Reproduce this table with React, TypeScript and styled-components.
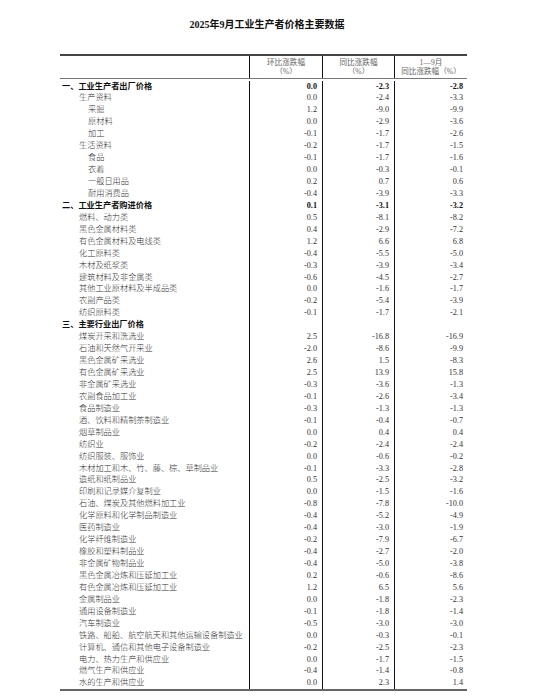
import styled, { createGlobalStyle } from "styled-components";

type Row = {
  label: string;
  level: 0 | 1 | 2;
  values?: [string, string, string];
};

const rows: Row[] = [
  { label: "一、工业生产者出厂价格", level: 0, values: ["0.0", "-2.3", "-2.8"] },
  { label: "生产资料", level: 1, values: ["0.0", "-2.4", "-3.3"] },
  { label: "采掘", level: 2, values: ["1.2", "-9.0", "-9.9"] },
  { label: "原材料", level: 2, values: ["0.0", "-2.9", "-3.6"] },
  { label: "加工", level: 2, values: ["-0.1", "-1.7", "-2.6"] },
  { label: "生活资料", level: 1, values: ["-0.2", "-1.7", "-1.5"] },
  { label: "食品", level: 2, values: ["-0.1", "-1.7", "-1.6"] },
  { label: "衣着", level: 2, values: ["0.0", "-0.3", "-0.1"] },
  { label: "一般日用品", level: 2, values: ["0.2", "0.7", "0.6"] },
  { label: "耐用消费品", level: 2, values: ["-0.4", "-3.9", "-3.3"] },
  { label: "二、工业生产者购进价格", level: 0, values: ["0.1", "-3.1", "-3.2"] },
  { label: "燃料、动力类", level: 1, values: ["0.5", "-8.1", "-8.2"] },
  { label: "黑色金属材料类", level: 1, values: ["0.4", "-2.9", "-7.2"] },
  { label: "有色金属材料及电线类", level: 1, values: ["1.2", "6.6", "6.8"] },
  { label: "化工原料类", level: 1, values: ["-0.4", "-5.5", "-5.0"] },
  { label: "木材及纸浆类", level: 1, values: ["-0.3", "-3.9", "-3.4"] },
  { label: "建筑材料及非金属类", level: 1, values: ["-0.6", "-4.5", "-2.7"] },
  { label: "其他工业原材料及半成品类", level: 1, values: ["0.0", "-1.6", "-1.7"] },
  { label: "农副产品类", level: 1, values: ["-0.2", "-5.4", "-3.9"] },
  { label: "纺织原料类", level: 1, values: ["-0.1", "-1.7", "-2.1"] },
  { label: "三、主要行业出厂价格", level: 0 },
  { label: "煤炭开采和洗选业", level: 1, values: ["2.5", "-16.8", "-16.9"] },
  { label: "石油和天然气开采业", level: 1, values: ["-2.0", "-8.6", "-9.9"] },
  { label: "黑色金属矿采选业", level: 1, values: ["2.6", "1.5", "-8.3"] },
  { label: "有色金属矿采选业", level: 1, values: ["2.5", "13.9", "15.8"] },
  { label: "非金属矿采选业", level: 1, values: ["-0.3", "-3.6", "-1.3"] },
  { label: "农副食品加工业", level: 1, values: ["-0.1", "-2.6", "-3.4"] },
  { label: "食品制造业", level: 1, values: ["-0.3", "-1.3", "-1.3"] },
  { label: "酒、饮料和精制茶制造业", level: 1, values: ["-0.1", "-0.4", "-0.7"] },
  { label: "烟草制品业", level: 1, values: ["0.0", "0.4", "0.4"] },
  { label: "纺织业", level: 1, values: ["-0.2", "-2.4", "-2.4"] },
  { label: "纺织服装、服饰业", level: 1, values: ["0.0", "-0.6", "-0.2"] },
  { label: "木材加工和木、竹、藤、棕、草制品业", level: 1, values: ["-0.1", "-3.3", "-2.8"] },
  { label: "造纸和纸制品业", level: 1, values: ["0.5", "-2.5", "-3.2"] },
  { label: "印刷和记录媒介复制业", level: 1, values: ["0.0", "-1.5", "-1.6"] },
  { label: "石油、煤炭及其他燃料加工业", level: 1, values: ["-0.8", "-7.8", "-10.0"] },
  { label: "化学原料和化学制品制造业", level: 1, values: ["-0.4", "-5.2", "-4.9"] },
  { label: "医药制造业", level: 1, values: ["-0.4", "-3.0", "-1.9"] },
  { label: "化学纤维制造业", level: 1, values: ["-0.2", "-7.9", "-6.7"] },
  { label: "橡胶和塑料制品业", level: 1, values: ["-0.4", "-2.7", "-2.0"] },
  { label: "非金属矿物制品业", level: 1, values: ["-0.4", "-5.0", "-3.8"] },
  { label: "黑色金属冶炼和压延加工业", level: 1, values: ["0.2", "-0.6", "-8.6"] },
  { label: "有色金属冶炼和压延加工业", level: 1, values: ["1.2", "6.5", "5.6"] },
  { label: "金属制品业", level: 1, values: ["0.0", "-1.8", "-2.3"] },
  { label: "通用设备制造业", level: 1, values: ["-0.1", "-1.8", "-1.4"] },
  { label: "汽车制造业", level: 1, values: ["-0.5", "-3.0", "-3.0"] },
  { label: "铁路、船舶、航空航天和其他运输设备制造业", level: 1, values: ["0.0", "-0.3", "-0.1"] },
  { label: "计算机、通信和其他电子设备制造业", level: 1, values: ["-0.2", "-2.5", "-2.3"] },
  { label: "电力、热力生产和供应业", level: 1, values: ["0.0", "-1.7", "-1.5"] },
  { label: "燃气生产和供应业", level: 1, values: ["-0.4", "-1.4", "-0.8"] },
  { label: "水的生产和供应业", level: 1, values: ["0.0", "2.3", "1.4"] },
];

const indents = [2, 19, 28];

export default function App() {
  return (
    <>
      <GlobalStyle />
      <Page>
        <Title>2025年9月工业生产者价格主要数据</Title>
        <Table>
          <HeadRow>
            <HeadCell />
            <HeadCell divider>
              环比涨跌幅
              <br />
              （%）
            </HeadCell>
            <HeadCell divider>
              同比涨跌幅
              <br />
              （%）
            </HeadCell>
            <HeadCell divider>
              1—9月
              <br />
              同比涨跌幅（%）
            </HeadCell>
          </HeadRow>
          {rows.map((row, i) => (
            <DataRow key={i}>
              <Label indent={indents[row.level]} strong={row.level === 0}>
                {row.label}
              </Label>
              {[0, 1, 2].map((c) => (
                <Num key={c} strong={row.level === 0} last={c === 2}>
                  {row.values ? row.values[c] : ""}
                </Num>
              ))}
            </DataRow>
          ))}
        </Table>
      </Page>
    </>
  );
}

const GlobalStyle = createGlobalStyle`
  html, body {
    margin: 0;
    padding: 0;
    background: #ffffff;
  }
  body {
    font-family: "Liberation Serif", "Noto Sans CJK SC", serif;
    color: #222;
  }
`;

const Page = styled.div`
  width: 549px;
  height: 700px;
  padding-top: 19px;
  box-sizing: border-box;
`;

const Title = styled.div`
  margin-left: 60px;
  width: 414px;
  text-align: center;
  font-size: 10px;
  line-height: 12px;
  font-weight: bold;
  color: #111;
`;

const Table = styled.div`
  margin: 23px 0 0 60px;
  width: 407px;
  border-top: 2px solid #444;
  border-bottom: 2px solid #666;
`;

const columns = "189px 73px 72px 73px";
const rowHeight = 11.95;

const HeadRow = styled.div`
  display: grid;
  grid-template-columns: ${columns};
  height: 22px;
  border-bottom: 1px solid #777;
`;

const HeadCell = styled.div<{ divider?: boolean }>`
  display: flex;
  align-items: center;
  justify-content: center;
  text-align: center;
  font-size: 7.6px;
  line-height: 8.6px;
  color: #666;
  padding-top: 1px;
  ${({ divider }) => (divider ? "border-left: 1px solid #111;" : "")}
`;

const DataRow = styled.div`
  display: grid;
  grid-template-columns: ${columns};
  height: ${rowHeight}px;

  &:nth-child(2) {
    padding-top: 1.5px;
  }
`;

const Label = styled.div<{ indent: number; strong?: boolean }>`
  padding-left: ${({ indent }) => indent}px;
  font-size: 8.2px;
  line-height: ${rowHeight}px;
  white-space: nowrap;
  color: ${({ strong }) => (strong ? "#111" : "#333")};
  font-weight: ${({ strong }) => (strong ? "bold" : 300)};
`;

const Num = styled.div<{ strong?: boolean; last?: boolean }>`
  border-left: 1px solid #111;
  text-align: right;
  padding-right: ${({ last }) => (last ? 4 : 5)}px;
  font-size: 8.2px;
  line-height: ${rowHeight}px;
  color: ${({ strong }) => (strong ? "#111" : "#333")};
  font-weight: ${({ strong }) => (strong ? "bold" : "normal")};
`;
